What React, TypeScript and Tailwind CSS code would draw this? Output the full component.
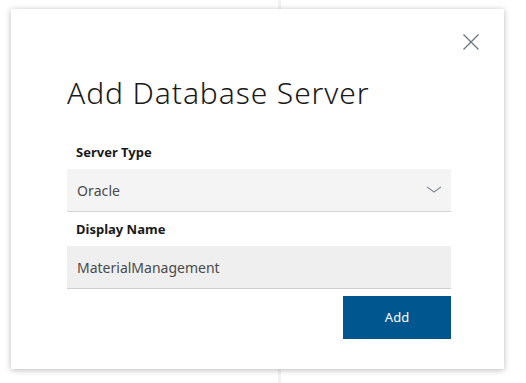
import React from "react";

const font = { fontFamily: '"Noto Sans", "Open Sans", sans-serif' };

function Field({ label, children }: { label: string; children: React.ReactNode }) {
  return (
    <div className="flex flex-col">
      <div className="pl-[9px] text-[13px] font-bold text-[#1a1a1a] leading-[18px] h-[34px] flex items-center">
        {label}
      </div>
      {children}
    </div>
  );
}

export default function App() {
  return (
    <div className="relative w-[526px] h-[383px] bg-white overflow-hidden" style={font}>
      {/* background page split */}
      <div className="flex h-full">
        <div className="w-[281px] h-full border-r-[3px] border-[#f2f2f2]" />
        <div className="flex-1 h-full bg-white" />
      </div>

      {/* dialog */}
      <div className="absolute left-[11px] top-[9px] w-[493px] h-[360px] bg-white shadow-[0_1px_6px_rgba(0,0,0,0.28)] pl-[56px] pr-[53px]">
        <button className="absolute right-[24px] top-[24px] w-[18px] h-[18px] text-[#6b7580]">
          <svg viewBox="0 0 18 18" width="18" height="18" fill="none" stroke="currentColor" strokeWidth="1.3">
            <path d="M1.5 1.5 L16.5 16.5 M16.5 1.5 L1.5 16.5" />
          </svg>
        </button>

        <h1 className="pt-[64px] text-[30px] font-light text-[#1a1a1a] leading-[40px] tracking-[0.9px]">
          Add Database Server
        </h1>

        <div className="mt-[22px] flex flex-col">
          <Field label="Server Type">
            <div className="h-[43px] bg-[#f4f4f4] border-b border-[#d4d4d4] flex items-center justify-between pl-[10px] pr-[9px]">
              <span className="text-[14px] text-[#4a4a4a] tracking-[0.1px]">Oracle</span>
              <svg viewBox="0 0 16 10" width="16" height="10" fill="none" stroke="#8a9098" strokeWidth="1.2">
                <path d="M1 2 L8 7 L15 2" />
              </svg>
            </div>
          </Field>
          <Field label="Display Name">
            <div className="h-[43px] bg-[#efefef] border-b border-[#cfcfcf] flex items-center pl-[10px]">
              <span className="text-[14px] text-[#4a4a4a]">MaterialManagement</span>
            </div>
          </Field>
          <div className="flex justify-end mt-[7px]">
            <button className="w-[108px] h-[43px] bg-[#00568f] text-white text-[13px]">Add</button>
          </div>
        </div>
      </div>
    </div>
  );
}
